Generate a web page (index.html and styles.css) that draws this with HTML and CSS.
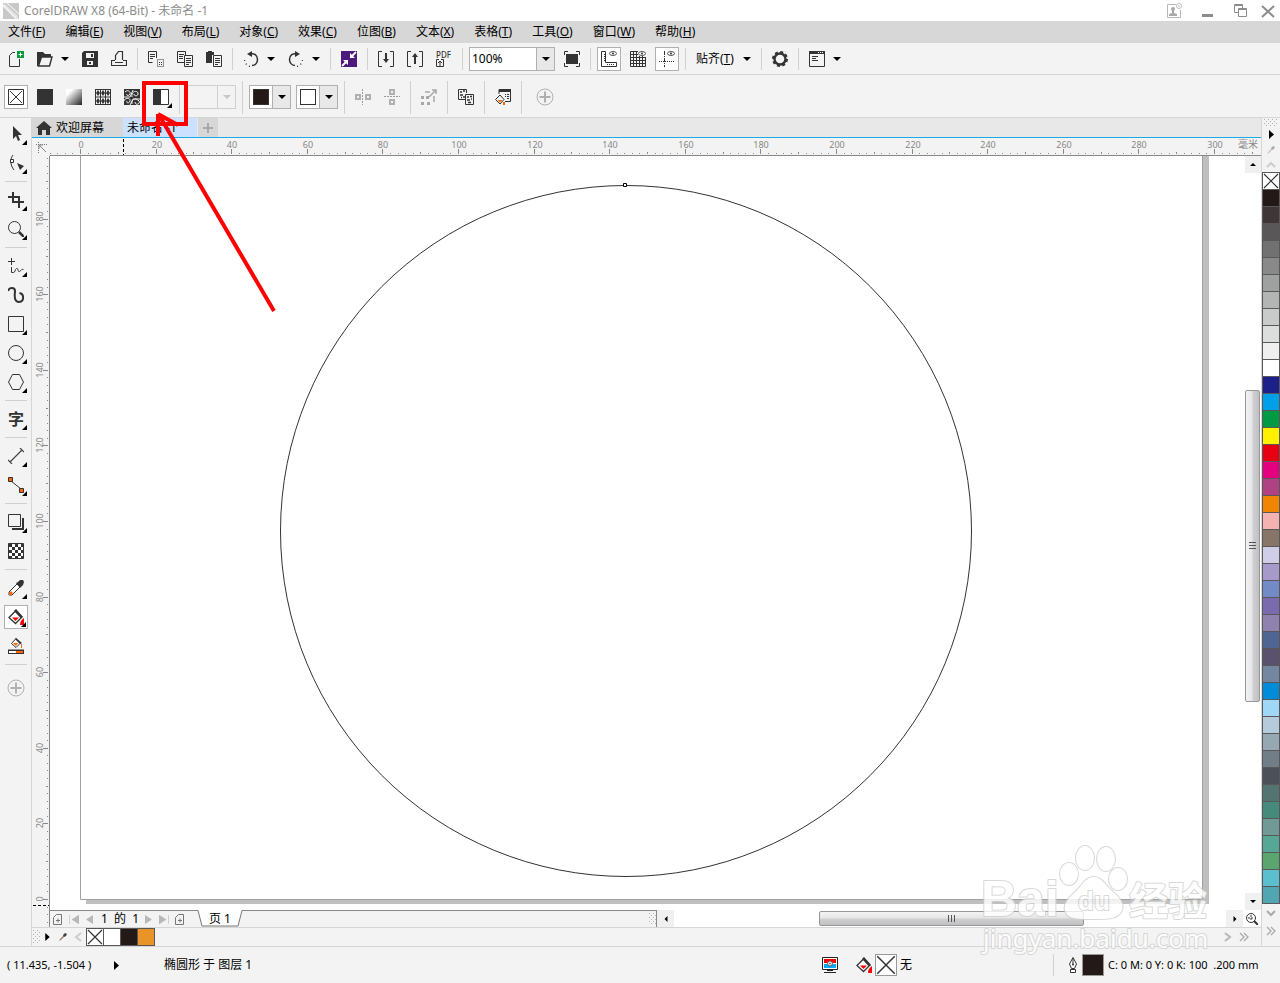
FILE: index.html
```html
<!DOCTYPE html>
<html lang="zh">
<head>
    <meta charset="UTF-8">
    <meta name="viewport" content="width=device-width, initial-scale=1.0">
    <title>CorelDRAW X8 (64-Bit) - 未命名 -1</title>
    <link rel="stylesheet" href="styles.css">
</head>
<body>

    <!-- 公用图形 -->
    <svg class="defs" width="0" height="0" aria-hidden="true">
        <symbol id="down" viewBox="0 0 8 4"><path d="M0 0h8L4 4z"/></symbol>
        <symbol id="right" viewBox="0 0 5 9"><path d="M0 0l5 4.500L0 9z"/></symbol>
        <symbol id="cross" viewBox="0 0 16 16"><path d="M1 1l14 14M15 1L1 15" fill="none" stroke="#333" stroke-width="1.200"/></symbol>
        <symbol id="plus" viewBox="0 0 18 18"><circle cx="9" cy="9" r="8" fill="none" stroke="#b0b0b0"/><path d="M3.500 9h11M9 3.500v11" stroke="#b0b0b0" stroke-width="2"/></symbol>
        <symbol id="pen" viewBox="0 0 10 10"><path d="M1 9l1-2 4-4 1 1-4 4z" fill="#a08070"/><path d="M5 3l2-2 2 1-1 2-2 1z" fill="#444"/></symbol>
        <symbol id="bucket" viewBox="0 0 16 16">
            <path d="M8 1.500L1 8.500l6.500 6L14 8z" fill="#fff" stroke="#333" stroke-width="1.300"/>
            <path d="M8 0l-2 2 6.500 7L15 8z" fill="#333"/>
            <path d="M4 8.500h7L7.500 12z" fill="#f00"/>
            <path d="M16 9v7h-4c0-3 1-5 4-7z" fill="#f00"/>
        </symbol>
        <symbol id="addpage" viewBox="0 0 10 11"><path d="M.5 3.500l3-3h5v10h-8zM3 6.500h4M5 4.500v4" fill="none" stroke="#777"/></symbol>
    </svg>

    <header class="titlebar">
        <svg class="logo" viewBox="0 0 16 16"><path d="M0 0h16v16H0z" fill="#c8c8c8"/><path d="M1 0l14 13v3h-3L0 4z" fill="#e2e2e2"/><path d="M4 0l12 11M0 2l13 13" stroke="#fff"/></svg>
        <span class="title">CorelDRAW X8 (64-Bit) - 未命名 -1</span>
        <div class="window-btns">
            <button aria-label="用户"><svg viewBox="0 0 16 16"><path d="M10 1.500H1.500v13h13V7" fill="none" stroke="#b8b8b8"/><circle cx="7" cy="6" r="2" fill="#aaa"/><path d="M6 7h2v3l3 1v2H3v-2l3-1z" fill="#aaa"/><circle cx="13" cy="3" r="2.500" fill="none" stroke="#c0c0c0"/><path d="M13 2v2" stroke="#c0c0c0"/></svg></button>
            <button aria-label="最小化"><svg viewBox="0 0 16 16"><path d="M3 11h11v3H3z" fill="#8c8c8c"/></svg></button>
            <button aria-label="还原"><svg viewBox="0 0 16 16"><path d="M6 9.500H2.500v-8h8V5M2 2.500h9M6.500 5.500h8v8h-8zM6 6.500h9" fill="none" stroke="#8c8c8c"/></svg></button>
            <button class="close" aria-label="关闭"><svg viewBox="0 0 16 16"><path d="M2 3l12 11M14 3L2 14" stroke="#8c8c8c" stroke-width="2"/></svg></button>
        </div>
    </header>

    <nav class="menubar">
        <button>文件(<u>F</u>)</button>
        <button>编辑(<u>E</u>)</button>
        <button>视图(<u>V</u>)</button>
        <button>布局(<u>L</u>)</button>
        <button>对象(<u>C</u>)</button>
        <button>效果(<u>C</u>)</button>
        <button>位图(<u>B</u>)</button>
        <button>文本(<u>X</u>)</button>
        <button>表格(<u>T</u>)</button>
        <button>工具(<u>O</u>)</button>
        <button>窗口(<u>W</u>)</button>
        <button>帮助(<u>H</u>)</button>
    </nav>

    <!-- 标准工具栏 -->
    <div class="toolbar">
        <button class="btn" title="新建"><svg viewBox="0 0 16 16"><path d="M7 1.500H4.500l-3 3v11h10V8" fill="none" stroke="#333"/><path d="M9 0h7v7H9z" fill="#0a9a3c"/><path d="M10.500 3.500h4M12.500 1.500v4" stroke="#fff"/></svg></button>
        <div class="split">
            <button class="btn" title="打开"><svg viewBox="0 0 16 16"><path d="M0 1h6l2 2h6v3H5L1 15H0z" fill="#333"/><path d="M4.500 6H15l-2.500 9h-11z" fill="#f3f3f3" stroke="#333" stroke-width="1.400"/></svg></button>
            <button class="drop" aria-label="最近"><svg><use href="#down"/></svg></button>
        </div>
        <button class="btn" title="保存"><svg viewBox="0 0 16 16"><path d="M2 0h14v16H0V2z" fill="#333"/><path d="M4 2h8v5H4zM5 10h6v4H5z" fill="#f3f3f3"/><path d="M9 3h2v3H9zM7 11h2v2H7z" fill="#333"/></svg></button>
        <button class="btn" title="打印"><svg viewBox="0 0 16 16"><path d="M4.500 9V4.500l3-4h4V9M4 9.500H.5v5h15v-5H12M4 11.500h8" fill="none" stroke="#333" stroke-width="1.200"/></svg></button>
        <i class="sep"></i>
        <button class="btn" title="剪切"><svg viewBox="0 0 16 16"><path d="M4.500 11.500h-4V.5h8V7M2 3.500h5M2 5.500h5M2 7.500h3" fill="none" stroke="#333"/><path d="M9.500 8.500h6v7h-6zM11 11.500h3M11 13.500h3" fill="none" stroke="#333" stroke-dasharray="1 1"/></svg></button>
        <button class="btn" title="复制"><svg viewBox="0 0 16 16"><path d="M7 11.500H.5V.5h8V4M2 3.500h5M2 5.500h4M2 7.500h4M7.500 4.500h8v11h-8zM9 7.500h5M9 9.500h5M9 11.500h5M9 13.500h3" fill="none" stroke="#333"/></svg></button>
        <button class="btn" title="粘贴"><svg viewBox="0 0 16 16"><path d="M0 1h2V0h4v1h2v3H6v8H0z" fill="#333"/><path d="M7.500 4.500h8v11h-8zM9 7.500h5M9 9.500h5M9 11.500h5M9 13.500h3" fill="#f3f3f3" stroke="#333"/></svg></button>
        <i class="sep"></i>
        <div class="split">
            <button class="btn" title="撤消"><svg viewBox="0 0 16 16"><path d="M7 3c4-1 7.500 1 7.500 5.500 0 3-2 6-5.500 6" fill="none" stroke="#333" stroke-width="1.500"/><path d="M7 15.300C4 15 1.500 12 1.500 8" fill="none" stroke="#333" stroke-width="1.300" stroke-dasharray="1 3"/><path d="M4 3l5-3v6z" fill="#333"/></svg></button>
            <button class="drop" aria-label="撤消列表"><svg><use href="#down"/></svg></button>
        </div>
        <div class="split">
            <button class="btn" title="重做"><svg viewBox="0 0 16 16"><path d="M9 3C5 2 1.500 4 1.500 8.500c0 3 2 6 5.500 6" fill="none" stroke="#333" stroke-width="1.500"/><path d="M9 15.300c3-.3 5.500-3.300 5.500-7.300" fill="none" stroke="#333" stroke-width="1.300" stroke-dasharray="1 3"/><path d="M12 3L7 0v6z" fill="#333"/></svg></button>
            <button class="drop" aria-label="重做列表"><svg><use href="#down"/></svg></button>
        </div>
        <i class="sep"></i>
        <button class="btn" title="搜索内容"><svg viewBox="0 0 16 16"><path d="M0 0h16v16H0z" fill="#4b1a7c"/><path d="M15 1l-4 4M1 15l4-4" stroke="#fff" stroke-width="1.800"/><path d="M9 2v5h5zM2 9h5v5z" fill="#fff"/></svg></button>
        <i class="sep"></i>
        <button class="btn" title="导入"><svg viewBox="0 0 16 16"><path d="M4 .5H.5v15H4M12 .5h3.500v15H12" fill="none" stroke="#333"/><path d="M8 2v7" stroke="#333" stroke-width="2"/><path d="M5 8h6l-3 4z" fill="#333"/></svg></button>
        <button class="btn" title="导出"><svg viewBox="0 0 16 16"><path d="M4 .5H.5v15H4M12 .5h3.500v15H12" fill="none" stroke="#333"/><path d="M8 5v8" stroke="#333" stroke-width="2"/><path d="M5 6h6L8 2z" fill="#333"/></svg></button>
        <button class="btn pdf" title="发布为 PDF"><span>PDF</span><svg class="pdf-page" viewBox="0 0 8 8"><path d="M3 .5H.5v7h7V.5H5M4 2v5M2 4l2-2 2 2" fill="none" stroke="#333"/></svg></button>
        <i class="sep"></i>
        <div class="zoom-level">
            <select aria-label="缩放级别"><option>100%</option><option>200%</option></select>
            <svg><use href="#down"/></svg>
        </div>
        <button class="btn" title="全屏预览"><svg viewBox="0 0 16 16"><path d="M2 3h12v10H2z" fill="#333"/><path d="M.5 4V.5H4M12 .5h3.500V4M.5 12v3.500H4M12 15.500h3.500V12" fill="none" stroke="#333"/></svg></button>
        <i class="sep"></i>
        <button class="btn on" title="显示标尺"><svg viewBox="0 0 16 16"><path d="M.5.500h4v11h11v4H.5zM3 3.500h1M3 5.500h1M3 7.500h1M3 9.500h1M6.500 13v1M8.500 13v1M10.500 13v1M12.500 13v1" fill="none" stroke="#333"/><ellipse cx="12" cy="2.500" rx="3.500" ry="2" fill="#fff" stroke="#555"/><circle cx="12" cy="2.500" r="1" fill="#333"/></svg></button>
        <button class="btn" title="显示网格"><svg viewBox="0 0 16 16"><path d="M.5.500v15h15V6M.5.500H8M3.500 0v16M6.500 0v16M9.500 5v11M12.500 5v11M0 3.500h8M0 6.500h16M0 9.500h16M0 12.500h16" fill="none" stroke="#333"/><ellipse cx="12" cy="2.500" rx="3.500" ry="2" fill="#fff" stroke="#555"/><circle cx="12" cy="2.500" r="1" fill="#333"/></svg></button>
        <button class="btn on" title="显示辅助线"><svg viewBox="0 0 16 16"><path d="M5.500 0v16" stroke="#333" stroke-dasharray="4 1 1 1"/><path d="M0 10.500h16" stroke="#333" stroke-dasharray="1 1"/><ellipse cx="12" cy="2.500" rx="3.500" ry="2" fill="#fff" stroke="#555"/><circle cx="12" cy="2.500" r="1" fill="#333"/></svg></button>
        <i class="sep"></i>
        <button class="snap">贴齐(<u>T</u>) <svg><use href="#down"/></svg></button>
        <i class="sep"></i>
        <button class="btn" title="选项"><svg viewBox="0 0 16 16"><circle cx="8" cy="8" r="5.500" fill="none" stroke="#333" stroke-width="2.400"/><circle cx="8" cy="8" r="7" fill="none" stroke="#333" stroke-width="2" stroke-dasharray="3 2.500"/></svg></button>
        <i class="sep"></i>
        <div class="split">
            <button class="btn" title="应用程序启动器"><svg viewBox="0 0 16 16"><path d="M.5.500h15v15H.5zM3 5.500h6M3 7.500h4M3 9.500h6" fill="none" stroke="#333"/><path d="M0 0h16v3H0z" fill="#333"/><path d="M9 1h1v1H9zM11 1h1v1h-1zM13 1h1v1h-1z" fill="#fff"/></svg></button>
            <button class="drop" aria-label="启动列表"><svg><use href="#down"/></svg></button>
        </div>
    </div>

    <!-- 属性栏 -->
    <div class="toolbar property-bar">
        <button class="btn on" title="无填充"><svg viewBox="0 0 16 16"><path d="M.5.500h15v15H.5zM2 2l12 12M14 2L2 14" fill="none" stroke="#333"/></svg></button>
        <button class="btn" title="均匀填充"><svg viewBox="0 0 16 16"><path d="M0 0h16v16H0z" fill="#333"/></svg></button>
        <button class="btn" title="渐变填充"><svg viewBox="0 0 16 16"><linearGradient id="fade" x2="1" y2="1"><stop offset=".2" stop-color="#fff"/><stop offset="1" stop-color="#222"/></linearGradient><path d="M0 0h16v16H0z" fill="url(#fade)"/></svg></button>
        <button class="btn" title="向量图样填充"><svg viewBox="0 0 16 16"><path d="M0 .5h16M0 8h16M0 15.500h16M.5 0v16M15.500 0v16M5.500 0v16M10.500 0v16" stroke="#333"/><path d="M3 1l2 3-2 3-2-3zM8 1l2 3-2 3-2-3zM13 1l2 3-2 3-2-3zM3 9l2 3-2 3-2-3zM8 9l2 3-2 3-2-3zM13 9l2 3-2 3-2-3z" fill="#333"/></svg></button>
        <button class="btn" title="底纹填充"><svg viewBox="0 0 16 16"><path d="M0 0h16v16H0z" fill="#333"/><path d="M1 3c3-3 6 0 5 2S2 7 3 5M8 8c-1-6 5-7 6-4s-4 4-4 1M0 12c1-4 7-3 6 0s-4 2-3 0M8 15c-1-6 5-6 7-3s-4 5-4 1M0 8h6l3-7M6 16l3-6h7" fill="none" stroke="#f3f3f3"/></svg></button>
        <button class="btn" title="双色图样填充"><svg viewBox="0 0 16 16"><path d="M.5.500h15v15H.5z" fill="#fff" stroke="#333"/><path d="M0 0h8v16H0z" fill="#333"/></svg><span class="flyout"></span></button>
        <i class="sep"></i>
        <button class="combo" disabled aria-label="填充挑选器"><span></span><span class="arrow"><svg><use href="#down"/></svg></span></button>
        <i class="sep"></i>
        <button class="combo" title="前景颜色"><span><b class="chip black"></b></span><span class="arrow"><svg><use href="#down"/></svg></span></button>
        <button class="combo" title="背景颜色"><span><b class="chip"></b></span><span class="arrow"><svg><use href="#down"/></svg></span></button>
        <i class="sep"></i>
        <button class="btn" title="水平镜像"><svg viewBox="0 0 16 16"><path d="M7.500 0v16" stroke="#999" stroke-dasharray="2 1"/><path d="M1 6h4v4H1zM11 6h4v4h-4z" fill="none" stroke="#b0b0b0" stroke-width="2"/></svg></button>
        <button class="btn" title="垂直镜像"><svg viewBox="0 0 16 16"><path d="M0 7.500h16" stroke="#999" stroke-dasharray="2 1"/><path d="M6 1h4v4H6zM6 11h4v4H6z" fill="none" stroke="#b0b0b0" stroke-width="2"/></svg></button>
        <i class="sep"></i>
        <button class="btn" title="变换填充"><svg viewBox="0 0 16 16"><path d="M0 7h3v3H0zM5 7h3v3H5zM0 13h3v3H0zM6 13h3v3H6z" fill="#a8a8a8"/><path d="M4 3h5M13 7v6M8 8l7-7M11 1h4v4" fill="none" stroke="#a8a8a8" stroke-width="1.500"/></svg></button>
        <i class="sep"></i>
        <button class="btn" title="复制填充"><svg viewBox="0 0 16 16"><path d="M7 10.500H.5V.5h8V4M7.500 5.500h8v10h-8z" fill="none" stroke="#333"/><path d="M2 3h2M5 2h2M2 6h3M5 8h2M3 8.500h1M9 8h2M12 7.500h2M9 11h3M13 10h1M10 13.500h3" stroke="#333" stroke-width="1.300"/></svg></button>
        <i class="sep"></i>
        <button class="btn" title="编辑填充"><svg viewBox="0 0 16 16"><path d="M4 5V.5h11.500v12H10M10 5.500h1M12 5.500h2M10 7.500h1M12 7.500h2M12 9.500h2" fill="none" stroke="#333"/><path d="M4 0h12v3H4z" fill="#333"/><path d="M5 6l-4.500 4.500L5 15l4-4.500z" fill="#f3f3f3" stroke="#333"/><path d="M2.500 11h5L5 13.500zM8 13h2v3H8z" fill="#f60"/></svg></button>
        <i class="sep"></i>
        <button class="btn quick" title="快速自定义"><svg class="plus"><use href="#plus"/></svg></button>
    </div>

    <div class="workspace">
        <!-- 工具箱 -->
        <aside class="toolbox">
            <button class="btn" title="选择"><svg viewBox="0 0 16 16"><path d="M5 0v13l3-3 2 5 2-1-2-5h4z" fill="#333"/></svg><span class="flyout"></span></button>
            <button class="btn" title="形状"><svg viewBox="0 0 16 16"><path d="M5 0C2 4 2 10 6 15" fill="none" stroke="#333"/><path d="M2.500 4.500h3v3h-3z" fill="#fff" stroke="#333"/><path d="M9 8l7 3-4 4z" fill="#333"/></svg><span class="flyout"></span></button>
            <i class="sep"></i>
            <button class="btn" title="裁剪"><svg viewBox="0 0 16 16"><path d="M0 5h11v7M5 0v10h11M11 8v8" fill="none" stroke="#333" stroke-width="2"/></svg><span class="flyout"></span></button>
            <button class="btn" title="缩放"><svg viewBox="0 0 16 16"><circle cx="6.500" cy="6.500" r="6" fill="none" stroke="#333"/><path d="M11 11l5 5" stroke="#333" stroke-width="2.500"/></svg><span class="flyout"></span></button>
            <i class="sep"></i>
            <button class="btn" title="手绘"><svg viewBox="0 0 16 16"><path d="M0 3.500h7M3.500 0v7M3.500 9v5.500h2c2 0 1-3 3-4s1 4 3 3 2-3 4-2" fill="none" stroke="#333"/></svg><span class="flyout"></span></button>
            <button class="btn" title="艺术笔"><svg viewBox="0 0 16 16"><path d="M0 4c1-4 7-4 7 0 0 3-2 10 3.500 11 6 0 6-8 1-9" fill="none" stroke="#333" stroke-width="2"/></svg></button>
            <button class="btn" title="矩形"><svg viewBox="0 0 16 16"><path d="M.5.500h15v15H.5z" fill="none" stroke="#333"/></svg><span class="flyout"></span></button>
            <button class="btn" title="椭圆形"><svg viewBox="0 0 16 16"><circle cx="8" cy="8" r="7.500" fill="none" stroke="#333"/></svg><span class="flyout"></span></button>
            <button class="btn" title="多边形"><svg viewBox="0 0 16 16"><path d="M4.500.500h7l4 7.500-4 7.500h-7L.5 8z" fill="none" stroke="#333"/></svg><span class="flyout"></span></button>
            <i class="sep"></i>
            <button class="btn text-tool" title="文本">字<span class="flyout"></span></button>
            <i class="sep"></i>
            <button class="btn" title="平行度量"><svg viewBox="0 0 16 16"><path d="M2 14L14 2M0 12l4 4M12 0l4 4" stroke="#444" stroke-width="1.200"/></svg><span class="flyout"></span></button>
            <button class="btn" title="直线连接器"><svg viewBox="0 0 16 16"><path d="M3 4l10 8" stroke="#333"/><path d="M.5.500h4v4h-4zM11.500 11.500h4v4h-4z" fill="#f60" stroke="#333"/></svg><span class="flyout"></span></button>
            <i class="sep"></i>
            <button class="btn" title="阴影"><svg viewBox="0 0 16 16"><path d="M.5.500h12v12H.5z" fill="none" stroke="#333"/><path d="M4 15h11V4" fill="none" stroke="#333" stroke-width="2"/></svg><span class="flyout"></span></button>
            <button class="btn" title="透明度"><svg viewBox="0 0 16 16"><pattern id="check" x="1" y="1" width="6" height="6" patternUnits="userSpaceOnUse"><path d="M0 0h3v3H0zM3 3h3v3H3z" fill="#333"/></pattern><path d="M.5.500h15v15H.5z" fill="#fff"/><path d="M.5.500h15v15H.5z" fill="url(#check)" stroke="#333"/></svg></button>
            <i class="sep"></i>
            <button class="btn" title="颜色滴管"><svg viewBox="0 0 16 16"><path d="M9 4l3 3-8 8H1v-3z" fill="#fff" stroke="#333"/><path d="M3 11l2 2-2 2H1v-2z" fill="#f60"/><path d="M8 3l2-1 2-2h3l1 2-1 3-2 2-1 1z" fill="#333"/></svg><span class="flyout"></span></button>
            <button class="btn on" title="交互式填充"><svg><use href="#bucket"/></svg><span class="flyout"></span></button>
            <button class="btn" title="智能填充"><svg viewBox="0 0 16 16"><path d="M8 .5l-4.500 5L8 9.500 12.500 5z" fill="#fff" stroke="#333"/><path d="M8 0l6 5-2 1-5-5zM0 11.500h16v4.500H0z" fill="#333"/><path d="M1 13h7v2H1z" fill="#fff"/><path d="M8 13h7v2H8zM5 5h5L8 8zM13 6h1v4h-1z" fill="#f60"/></svg></button>
            <i class="sep"></i>
            <button class="btn add" title="快速自定义"><svg class="plus"><use href="#plus"/></svg></button>
        </aside>

        <main class="document">
            <div class="tabs">
                <button class="tab home"><svg viewBox="0 0 16 14"><path d="M8 0l8 7h-2v7h-4V9H6v5H2V7H0z" fill="#333"/></svg>欢迎屏幕</button>
                <button class="tab active">未命名 -1</button>
                <button class="tab new" aria-label="新建文档"><svg viewBox="0 0 12 12"><path d="M1 6h10M6 1v10" stroke="#a8a8a8" stroke-width="2"/></svg></button>
            </div>
            <div class="ruler-row">
                <div class="corner"><svg viewBox="0 0 12 12"><path d="M0 2.500h11M2.500 0v11" stroke="#777" stroke-dasharray="1 1"/><path d="M3 3l7 7M3 3h4M3 3v4" fill="none" stroke="#888"/></svg></div>
                <svg class="ruler-h" id="rulerH"></svg>
            </div>
            <div class="canvas-row">
                <svg class="ruler-v" id="rulerV"></svg>
                <div class="view">
                    <div class="canvas-area">
                        <!-- 页面与椭圆 -->
                        <svg class="canvas">
                            <path d="M1153 0h6v748H36v-4h1117z" fill="#bfbfbf"/>
                            <path d="M30.500 0v743.500h1122V0" fill="none" stroke="#a0a0a0"/>
                            <circle cx="576" cy="375" r="345.500" fill="none" stroke="#333"/>
                            <path d="M573.500 27.500h3v3h-3z" fill="#fff" stroke="#000"/>
                        </svg>
                        <div class="scroll-v">
                            <button class="scroll-btn" aria-label="向上"><svg viewBox="0 0 8 4"><path d="M0 4h8L4 0z"/></svg></button>
                            <div class="track"><div class="thumb"><i></i><i></i><i></i></div></div>
                            <button class="scroll-btn" aria-label="向下"><svg><use href="#down"/></svg></button>
                        </div>
                    </div>
                    <div class="page-row">
                        <div class="page-nav">
                            <button aria-label="添加页"><svg class="page-icon"><use href="#addpage"/></svg></button>
                            <button aria-label="第一页"><svg viewBox="0 0 10 9"><path d="M.5 0v9M10 0v9L3 4.500z" fill="#b8b8b8" stroke="#b8b8b8" stroke-width=".6"/></svg></button>
                            <button aria-label="上一页"><svg viewBox="0 0 10 9"><path d="M8 0v9L1 4.500z" fill="#b8b8b8"/></svg></button>
                            <span class="page-count">1&nbsp; 的&nbsp; 1</span>
                            <button aria-label="下一页"><svg viewBox="0 0 10 9"><path d="M2 0v9l7-4.500z" fill="#b8b8b8"/></svg></button>
                            <button aria-label="最后一页"><svg viewBox="0 0 10 9"><path d="M9.500 0v9M0 0v9l7-4.500z" fill="#b8b8b8" stroke="#b8b8b8" stroke-width=".6"/></svg></button>
                            <button aria-label="添加页"><svg class="page-icon"><use href="#addpage"/></svg></button>
                            <button class="page-tab"><svg viewBox="0 0 46 17"><path d="M0 0h46l-5 16H5z" fill="#fff"/><path d="M0 .5h1l4 15.500h36L45 .5h1" fill="none" stroke="#777"/></svg><span>页 1</span></button>
                            <span class="grip"></span>
                        </div>
                        <div class="scroll-h">
                            <button class="scroll-btn" aria-label="向左"><svg viewBox="0 0 4 8"><path d="M4 0v8L0 4z"/></svg></button>
                            <div class="track"><div class="thumb"><i></i><i></i><i></i></div></div>
                            <button class="scroll-btn" aria-label="向右"><svg viewBox="0 0 4 8"><path d="M0 0v8l4-4z"/></svg></button>
                        </div>
                        <button class="navigator" aria-label="导航器"><svg viewBox="0 0 12 12"><circle cx="5" cy="5" r="4.500" fill="none" stroke="#333"/><path d="M5 2v6M2 5h6" stroke="#333" stroke-dasharray="2 1"/><path d="M8 8l4 4" stroke="#333" stroke-width="2"/></svg></button>
                    </div>
                </div>
            </div>
            <div class="doc-palette">
                <span class="grip"></span>
                <button aria-label="菜单"><svg class="right"><use href="#right"/></svg></button>
                <button aria-label="滴管"><svg class="dropper"><use href="#pen"/></svg></button>
                <button aria-label="向左滚动"><svg class="dropper" viewBox="0 0 10 10"><path d="M8 1L3 5l5 4" fill="none" stroke="#ccc" stroke-width="2"/></svg></button>
                <div class="doc-colors" id="docColors"></div>
                <button class="push" aria-label="向右滚动"><svg class="dropper" viewBox="0 0 10 10"><path d="M3 1l5 4-5 4" fill="none" stroke="#b8b8b8" stroke-width="2"/></svg></button>
                <button aria-label="展开"><svg class="dropper" viewBox="0 0 10 10"><path d="M1 1l4 4-4 4M5 1l4 4-4 4" fill="none" stroke="#aaa" stroke-width="1.300"/></svg></button>
            </div>
        </main>

        <!-- 调色板 -->
        <aside class="palette">
            <span class="grip wide"></span>
            <button aria-label="菜单"><svg class="right"><use href="#right"/></svg></button>
            <button class="faint" aria-label="滴管"><svg class="dropper"><use href="#pen"/></svg></button>
            <button aria-label="向上滚动"><svg class="dropper" viewBox="0 0 10 10"><path d="M1 7l4-4 4 4" fill="none" stroke="#ccc" stroke-width="2"/></svg></button>
            <div class="colors" id="colors"></div>
            <button aria-label="向下滚动"><svg class="dropper" viewBox="0 0 10 10"><path d="M1 3l4 4 4-4" fill="none" stroke="#aaa" stroke-width="2"/></svg></button>
            <button aria-label="展开"><svg class="dropper" viewBox="0 0 10 10"><path d="M1 1l4 4-4 4M5 1l4 4-4 4" fill="none" stroke="#aaa" stroke-width="1.300"/></svg></button>
        </aside>
    </div>

    <footer class="statusbar">
        <span class="coords">( 11.435, -1.504 )</span>
        <button aria-label="状态菜单"><svg class="right"><use href="#right"/></svg></button>
        <span class="object">椭圆形 于 图层 1</span>
        <div class="fill-info">
            <svg class="icon" viewBox="0 0 16 16"><path d="M.5.500h15v12H.5zM2 15.500h12" fill="#fff" stroke="#222"/><path d="M2 2h12v4H2z" fill="#f00"/><path d="M2 7h12v4H2z" fill="#0af"/><path d="M5 13h6v1H5z" fill="#222"/><circle cx="8" cy="6.500" r="2.500" fill="#ddd" stroke="#666"/><path d="M7.500 6h1v1h-1z"/></svg>
            <svg class="icon bucket"><use href="#bucket"/></svg>
            <span class="chip-box"><svg class="none"><use href="#cross"/></svg></span>
            <span>无</span>
        </div>
        <div class="outline-info">
            <svg class="nib" viewBox="0 0 10 16"><path d="M5 .5L1.500 7l2 4.500h3l2-4.500zM5 1v6M2.500 12.500h5v3h-5z" fill="#fff" stroke="#333"/><circle cx="5" cy="7.500" r="1" fill="#333"/></svg>
            <span class="chip-box black"></span>
            <span class="outline-text">C: 0 M: 0 Y: 0 K: 100 &nbsp;.200 mm</span>
        </div>
    </footer>

    <!-- 红色标注 -->
    <svg class="callout" viewBox="0 0 140 240">
        <path d="M4 4h42v41H4zM134 232L19 36M18 35v22M18 35l20 11" fill="none" stroke="#f00" stroke-width="4"/>
    </svg>

    <!-- 水印 -->
    <svg class="watermark" viewBox="0 0 240 120">
        <text class="wm-latin" x="1" y="76">Bai</text>
        <path d="M114 37c8 0 11 8 19 15s12 13 8 20-13 7-27 7-24 1-28-6 2-15 9-21 10-15 19-15z"/>
        <ellipse cx="89" cy="34" rx="9" ry="11"/>
        <ellipse cx="105" cy="18" rx="9" ry="12"/>
        <ellipse cx="126" cy="19" rx="9" ry="12"/>
        <ellipse cx="138" cy="39" rx="9" ry="11"/>
        <text class="wm-du" x="98" y="70">du</text>
        <text class="wm-cjk" x="149" y="75">经验</text>
        <text class="wm-url" x="3" y="108">jingyan.baidu.com</text>
    </svg>

    <script src="script.js"></script>
</body>
</html>
```

FILE: styles.css
```css
* {
    box-sizing: border-box;
}
body {
    margin: 0;
    height: 100vh;
    display: flex;
    flex-direction: column;
    position: relative;
    overflow: hidden;
    background-color: #f3f3f3;
    color: #000;
    font-family: "Noto Sans", "Noto Sans CJK SC", sans-serif;
    font-size: 12px;
    line-height: 16px;
}
button, select {
    margin: 0;
    padding: 0;
    border: 0;
    background: none;
    color: inherit;
    font: inherit;
}
svg {
    display: block;
    flex: none;
}
.defs {
    position: absolute;
}

/* 标题栏 */
.titlebar {
    display: flex;
    align-items: center;
    height: 21px;
    padding-left: 3px;
    background-color: #fff;
    color: #8c8c8c;
}
.logo {
    width: 16px;
    height: 16px;
    margin-right: 5px;
}
.window-btns {
    display: flex;
    gap: 17px;
    margin-left: auto;
    padding-right: 4px;
}
.window-btns .close {
    margin-left: -5px;
}
.window-btns svg {
    width: 16px;
    height: 16px;
}

/* 菜单栏 */
.menubar {
    display: flex;
    height: 22px;
    background-color: #d7d7d7;
}
.menubar button {
    padding: 0 12px 0 8px;
}
u {
    text-underline-offset: 1px;
}

/* 工具栏 */
.toolbar {
    display: flex;
    align-items: center;
    gap: 5px;
    height: 32px;
    padding-left: 4px;
    border-bottom: 1px solid #d6d6d6;
}
.property-bar {
    height: 43px;
    padding-top: 2px;
}
.btn {
    display: flex;
    flex: none;
    align-items: center;
    justify-content: center;
    position: relative;
    width: 24px;
    height: 24px;
}
.btn svg {
    width: 16px;
    height: 16px;
}
.btn.on {
    border: 1px solid #b0b0b0;
    background-color: #fff;
}
.btn svg.plus {
    width: 18px;
    height: 18px;
}
.quick {
    margin-left: 5px;
}
.split {
    display: flex;
}
.drop {
    display: flex;
    align-items: center;
    justify-content: center;
    width: 16px;
}
.drop svg, .snap svg, .arrow svg, .zoom-level svg {
    width: 8px;
    height: 4px;
}
.toolbar .sep {
    width: 1px;
    height: 22px;
    margin: 0 1px;
    background-color: #d0d0d0;
}
.property-bar .sep {
    height: 33px;
}
.btn.pdf {
    flex-direction: column;
    align-items: flex-start;
    padding-left: 4px;
    color: #333;
    font-size: 8px;
    font-weight: 500;
    line-height: 8px;
}
.btn svg.pdf-page {
    width: 8px;
    height: 8px;
}
.zoom-level {
    display: flex;
    align-items: center;
    position: relative;
    width: 86px;
    height: 24px;
    border: 1px solid #b0b0b0;
    background: linear-gradient(to left, #e8e8e8 17px, #b0b0b0 17px, #b0b0b0 18px, #fff 18px);
}
.zoom-level select {
    width: 100%;
    height: 22px;
    padding-left: 2px;
    appearance: none;
}
.zoom-level svg {
    position: absolute;
    right: 4px;
    pointer-events: none;
}
.snap {
    display: flex;
    align-items: center;
    width: 63px;
    padding: 0 4px;
}
.snap svg {
    margin-left: auto;
}
.combo {
    display: flex;
    width: 42px;
    height: 24px;
    border: 1px solid #b0b0b0;
    background-color: #fff;
}
.combo span {
    display: flex;
    flex: 1;
    align-items: center;
    justify-content: center;
    height: 22px;
}
.combo .arrow {
    flex: none;
    width: 18px;
    border-left: 1px solid #b0b0b0;
    background-color: #e8e8e8;
}
.combo:disabled {
    width: 50px;
    border-color: #d0d0d0;
    background-color: #f3f3f3;
    fill: #c8c8c8;
}
.combo:disabled .arrow {
    border-color: #d0d0d0;
    background-color: #f3f3f3;
}
.chip {
    width: 16px;
    height: 16px;
    border: 1px solid #333;
    background-color: #fff;
}
.black {
    background-color: #231916;
}
.flyout {
    position: absolute;
    right: 1px;
    bottom: 1px;
    border-left: 5px solid transparent;
    border-bottom: 5px solid #000;
}

/* 工作区 */
.workspace {
    display: flex;
    flex: 1;
    min-height: 0;
}
.toolbox {
    display: flex;
    flex: none;
    flex-direction: column;
    gap: 5px;
    width: 32px;
    padding: 4px 3px 0 4px;
    border-right: 1px solid #d6d6d6;
}
.toolbox .sep {
    width: 22px;
    height: 1px;
    margin: 1px;
    background-color: #d0d0d0;
}
.toolbox .add {
    margin-top: 5px;
}
.text-tool {
    color: #333;
    font-size: 16px;
    font-weight: bold;
}
.document {
    display: flex;
    flex: 1;
    flex-direction: column;
    min-width: 0;
}
.tabs {
    display: flex;
    height: 20px;
    border-bottom: 1px solid #1aaae6;
    background-color: #e8e8e8;
}
.tab {
    display: flex;
    align-items: center;
    padding: 0 4px;
    background-color: #d7d7d7;
}
.tab.home {
    width: 91px;
}
.tab.home svg {
    width: 16px;
    height: 14px;
    margin-right: 4px;
}
.tab.active {
    width: 74px;
    background-color: #cce1ff;
}
.tab.new {
    margin-left: 1px;
}
.tab.new svg {
    width: 12px;
    height: 12px;
}

/* 标尺 */
.ruler-row {
    display: flex;
    height: 18px;
}
.corner {
    width: 18px;
    padding: 4px 0 0 4px;
}
.corner svg {
    width: 12px;
    height: 12px;
}
.ruler-h {
    flex: 1;
    width: 0;
    height: 18px;
    border-bottom: 1px solid #888;
}
.ruler-v {
    width: 18px;
    height: 100%;
    border-right: 1px solid #888;
}
.ruler-h text, .ruler-v text {
    fill: #888;
    font-size: 9px;
    text-anchor: middle;
}
.ruler-h .unit {
    font-size: 10px;
    text-anchor: end;
}
.tick {
    stroke: #888;
    shape-rendering: crispEdges;
}
.cursor-mark {
    stroke: #000;
    stroke-dasharray: 3 2;
    shape-rendering: crispEdges;
}
.canvas-row {
    display: flex;
    flex: 1;
    min-height: 0;
}
.view {
    display: flex;
    flex: 1;
    flex-direction: column;
    min-width: 0;
}
.canvas-area {
    display: flex;
    flex: 1;
    min-height: 0;
    background-color: #fff;
}
.canvas {
    flex: 1;
    width: 0;
    height: 100%;
}

/* 滚动条 */
.scroll-v {
    display: flex;
    flex-direction: column;
    width: 16px;
}
.scroll-h {
    display: flex;
    flex: 1;
    background-color: #fff;
}
.scroll-btn {
    display: flex;
    flex: none;
    align-items: center;
    justify-content: center;
    width: 17px;
    height: 17px;
    background-color: #f0f0f0;
}
.scroll-v .scroll-btn {
    width: 16px;
}
.scroll-v .scroll-btn svg {
    width: 6px;
    height: 3px;
}
.scroll-h .scroll-btn svg {
    width: 4px;
    height: 6px;
}
.track {
    display: flex;
    flex: 1;
}
.scroll-v .track {
    flex-direction: column;
    padding-right: 1px;
}
.track::before, .track::after {
    content: "";
}
.scroll-v .track::before {
    flex: 218;
}
.scroll-v .track::after {
    flex: 192;
}
.scroll-h .track::before {
    flex: 146;
}
.scroll-h .track::after {
    flex: 143;
}
.thumb {
    display: flex;
    align-items: center;
    justify-content: center;
    gap: 2px;
    border: 1px solid #979797;
    border-radius: 2px;
}
.scroll-v .thumb {
    flex: 310;
    flex-direction: column;
    background: linear-gradient(to right, #f3f3f3, #e6e6e8 45%, #cfcfd2 55%, #c0c0c4);
}
.scroll-h .thumb {
    flex: 264;
    height: 15px;
    margin-top: 1px;
    background: linear-gradient(#f3f3f3, #e6e6e8 45%, #cfcfd2 55%, #c0c0c4);
}
.thumb i {
    background-color: #555;
}
.scroll-v .thumb i {
    width: 7px;
    height: 1px;
}
.scroll-h .thumb i {
    width: 1px;
    height: 7px;
}

/* 页面导航 */
.page-row {
    display: flex;
    flex: none;
    height: 17px;
    background-color: #fff;
}
.page-nav {
    display: flex;
    align-items: center;
    gap: 6px;
    width: 607px;
    padding-left: 3px;
    border-top: 1px solid #888;
    border-right: 1px solid #888;
    background-color: #f3f3f3;
}
.page-nav svg {
    width: 10px;
    height: 9px;
}
.page-nav svg.page-icon {
    height: 11px;
}
.page-count {
    width: 36px;
    text-align: center;
    white-space: nowrap;
}
.page-tab {
    position: relative;
    width: 46px;
    height: 17px;
    margin: -1px 0 0 6px;
}
.page-nav .page-tab svg {
    position: absolute;
    top: 0;
    left: 0;
    width: 46px;
    height: 17px;
}
.page-tab span {
    position: relative;
}
.grip {
    width: 7px;
    height: 14px;
    background-image: linear-gradient(#b0b0b0, #b0b0b0), linear-gradient(#b0b0b0, #b0b0b0);
    background-image:
        conic-gradient(from 270deg at 1px 1px, #b0b0b0 90deg, transparent 0),
        conic-gradient(from 270deg at 1px 1px, #b0b0b0 90deg, transparent 0);
    background-position: 0 0, 2px 2px;
    background-size: 4px 4px;
}
.page-nav .grip {
    height: 12px;
    margin-left: auto;
}
.navigator {
    display: flex;
    align-items: center;
    justify-content: center;
    width: 18px;
}
.navigator svg {
    width: 12px;
    height: 12px;
}
.doc-palette {
    display: flex;
    flex: none;
    align-items: center;
    height: 19px;
    padding: 0 10px 0 1px;
    border-top: 1px solid #d6d6d6;
}
.doc-palette button {
    display: flex;
    justify-content: center;
    width: 15px;
}
.right {
    width: 5px;
    height: 9px;
}
.doc-palette .right {
    height: 8px;
}
.dropper {
    width: 10px;
    height: 10px;
}
.doc-palette .push {
    width: 18px;
    margin-left: auto;
}
.doc-colors {
    display: flex;
    gap: 1px;
    margin-left: 1px;
    padding: 1px;
    background-color: #595757;
}
.doc-colors button {
    width: 16px;
    height: 16px;
}

/* 右侧调色板 */
.palette {
    display: flex;
    flex: none;
    flex-direction: column;
    align-items: center;
    width: 19px;
    border-left: 1px solid #d6d6d6;
}
.palette button {
    display: flex;
    align-items: center;
    justify-content: center;
    height: 15px;
}
.palette .faint {
    opacity: 0.4;
}
.grip.wide {
    width: 14px;
    height: 8px;
    margin-top: 1px;
}
.palette .colors {
    display: flex;
    flex-direction: column;
    gap: 1px;
    padding: 1px;
    background-color: #595757;
}
.palette .colors button {
    width: 16px;
    height: 16px;
}
.palette > button:nth-last-child(-n+2) {
    height: 18px;
}
.swatch svg {
    width: 16px;
    height: 16px;
}

/* 状态栏 */
.statusbar {
    display: flex;
    flex: none;
    align-items: center;
    height: 37px;
    padding: 0 18px 0 7px;
    border-top: 1px solid #d6d6d6;
    white-space: nowrap;
}
.coords {
    width: 107px;
}
.coords, .outline-text {
    font-size: 11px;
}
.object {
    margin-left: 45px;
}
.fill-info {
    display: flex;
    align-items: center;
    gap: 3px;
    width: 231px;
    margin-left: auto;
}
.icon {
    width: 16px;
    height: 16px;
}
.bucket {
    margin-left: 15px;
}
.chip-box {
    width: 22px;
    height: 22px;
    border: 1px solid #999;
}
.chip-box:not(.black) {
    background-color: #fff;
}
.none {
    width: 20px;
    height: 20px;
}
.outline-info {
    display: flex;
    align-items: center;
    gap: 4px;
    height: 22px;
    padding-left: 14px;
    border-left: 1px solid #d0d0d0;
}
.outline-text {
    min-width: 154px;
}
.nib {
    width: 10px;
    height: 16px;
}

/* 覆盖层 */
.callout {
    position: absolute;
    top: 79px;
    left: 140px;
    width: 140px;
    height: 240px;
    pointer-events: none;
}
.watermark {
    position: absolute;
    right: 60px;
    bottom: 23px;
    width: 240px;
    height: 120px;
    opacity: 0.8;
    fill: #fff;
    stroke: #cfcfcf;
    stroke-width: 2px;
    stroke-linejoin: round;
    paint-order: stroke;
    pointer-events: none;
}
.wm-latin {
    font: bold 50px "Liberation Sans", sans-serif;
}
.wm-du {
    font: bold 26px "Liberation Sans", sans-serif;
}
.wm-cjk {
    font: bold 39px "Noto Sans CJK SC", sans-serif;
}
.wm-url {
    font: 26px "Noto Sans", sans-serif;
}
```

FILE: script.js
```js
var SVG_NS = "http://www.w3.org/2000/svg";
var SCALE = 3.78; // 每毫米像素

function add(parent, name, attrs, text) {
    var el = document.createElementNS(SVG_NS, name);
    for (var key in attrs) {
        el.setAttribute(key, attrs[key]);
    }
    if (text !== undefined) {
        el.textContent = text;
    }
    parent.appendChild(el);
    return el;
}

function tickStart(mm) {
    if (mm % 20 === 0) return 11;
    if (mm % 10 === 0) return 14;
    return 15;
}

// 水平标尺
var rulerH = document.getElementById("rulerH");
var pathH = "";
for (var mm = -8; mm <= 310; mm += 2) {
    var x = 30 + Math.round(mm * SCALE);
    pathH += "M" + (x + 0.5) + " " + tickStart(mm) + "V16";
    if (mm >= 0 && mm % 20 === 0) {
        add(rulerH, "text", { x: x + 1, y: 10 }, mm);
    }
}
add(rulerH, "path", { d: pathH, "class": "tick" });
add(rulerH, "path", { d: "M73.500 1V17", "class": "cursor-mark" });
add(rulerH, "text", { x: rulerH.clientWidth - 3, y: 10, "class": "unit" }, "毫米");

// 垂直标尺
var rulerV = document.getElementById("rulerV");
var pathV = "";
for (var v = -6; v <= 196; v += 2) {
    var y = 743 - Math.round(v * SCALE);
    pathV += "M" + tickStart(v) + " " + (y + 0.5) + "H16";
    if (v >= 0 && v % 20 === 0) {
        add(rulerV, "text", { transform: "translate(11 " + y + ") rotate(-90)" }, v);
    }
}
add(rulerV, "path", { d: pathV, "class": "tick" });
add(rulerV, "path", { d: "M1 749.500H17", "class": "cursor-mark" });

// 色块
function fillColors(id, colors) {
    var box = document.getElementById(id);
    colors.forEach(function (color) {
        var btn = document.createElement("button");
        btn.className = "swatch";
        btn.title = color;
        if (color === "none") {
            btn.style.backgroundColor = "#fff";
            add(add(btn, "svg", {}), "use", { href: "#cross" });
        } else {
            btn.style.backgroundColor = color;
        }
        box.appendChild(btn);
    });
}

fillColors("docColors", ["none", "#fff", "#231916", "#e99426"]);
fillColors("colors", [
    "none", "#231916", "#3e3637", "#595757", "#727171", "#898989", "#9fa0a0",
    "#b3b5b4", "#c9caca", "#dcdddd", "#efefef", "#ffffff", "#1d2088", "#00a0e9",
    "#009944", "#fff100", "#e60012", "#e4007f", "#af4283", "#ef8500", "#f5b2b2",
    "#88756a", "#d0cde6", "#a69acb", "#728bc6", "#7a6bae", "#8f82ae", "#506692",
    "#5a516f", "#7486a0", "#008cd9", "#9fd8f6", "#b5cbda", "#96a8b1", "#717e87",
    "#4b5059", "#547472", "#458b7b", "#719a97", "#56a795", "#5ba66f", "#5bbfce",
    "#50a7b3"
]);
```
